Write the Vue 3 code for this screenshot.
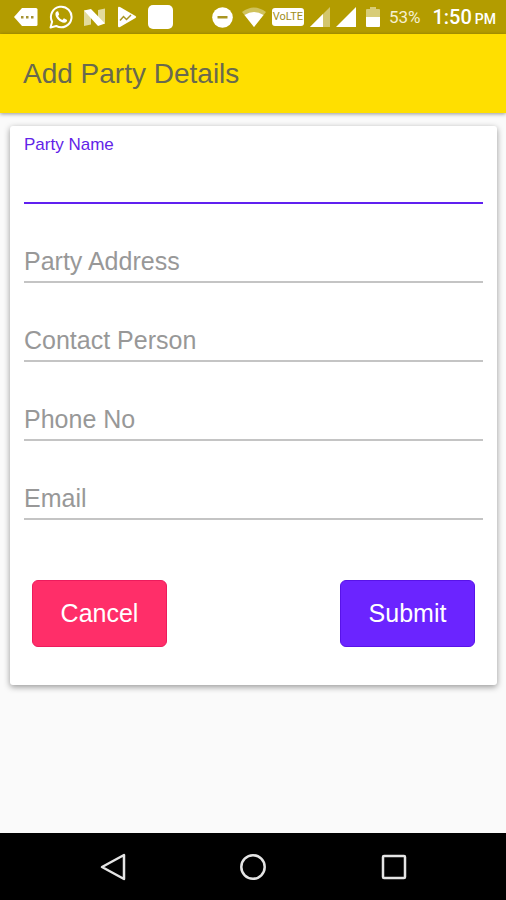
<script setup>
import { reactive, ref } from 'vue'

const fields = [
  { id: 'party-name', label: 'Party Name', type: 'text' },
  { id: 'party-address', label: 'Party Address', type: 'text' },
  { id: 'contact-person', label: 'Contact Person', type: 'text' },
  { id: 'phone-no', label: 'Phone No', type: 'tel' },
  { id: 'email', label: 'Email', type: 'email' },
]

const active = ref('party-name')
const values = reactive({})

function clearForm() {
  fields.forEach((field) => { values[field.id] = '' })
  active.value = 'party-name'
}
</script>

<template>
  <div class="screen">
    <div class="status">
      <div class="notices">
        <svg width="24" height="24" viewBox="0 0 24 24">
          <path d="M8 3h14a1.500 1.500 0 0 1 1.500 1.500v15a1.500 1.500 0 0 1-1.500 1.500H8L0 12z" fill="#fff" />
          <path d="M7 11h2.500v2.500H7zM12 11h2.500v2.500H12zM17 11h2.500v2.500H17z" fill="#a69335" />
        </svg>
        <svg width="24" height="24" viewBox="0 0 24 24">
          <path d="M1.500 22.500l1.600-5.800A10.300 10.300 0 1 1 7.300 21z" fill="none" stroke="#fff" stroke-width="2" stroke-linejoin="round" />
          <path d="M8.300 6.300c-.5 0-1.900.9-1.900 2.800 0 4 4.700 8.600 8.700 8.600 1.900 0 3-1.400 3-2.800l-3.200-1.700-1.500 1.700c-1.900-.7-3.400-2-4.300-4l1.100-1.400-1-2.900z" fill="#fff" />
        </svg>
        <svg width="22" height="24" viewBox="0 0 22 24">
          <path d="M0 5.500h7v14l-7 1.500zM14 5l7-1.500v15l-7 .5z" fill="#e2da9c" />
          <path d="M0 5.500L7 4 21 18.500 14 21z" fill="#fff" />
        </svg>
        <svg width="20" height="24" viewBox="0 0 20 24">
          <path d="M1 3q0-2 2-1l15.500 9q1.500 1 0 2L3 22q-2 1-2-1z" fill="#fff" />
          <path d="M3 15.500l3.500-4 3 3 4.500-4.500" fill="none" stroke="#a99523" stroke-width="1.500" />
        </svg>
        <svg width="25" height="24" viewBox="0 0 25 24">
          <rect width="25" height="24" rx="5" fill="#fff" />
        </svg>
      </div>
      <div class="system">
        <svg width="21" height="22" viewBox="0 0 21 22">
          <circle cx="10.500" cy="11.500" r="10.300" fill="#fff" />
          <path d="M5.500 10h10v2.500h-10z" fill="#a99523" />
        </svg>
        <svg class="wifi" width="24" height="20" viewBox="0 0 24 20">
          <path d="M12 20L0 5Q12-4 24 5z" fill="#cfc25c" />
          <path d="M12 20L2.500 8Q12 2 21.500 8z" fill="#fff" />
        </svg>
        <span class="volte">VoLTE</span>
        <svg width="20" height="20" viewBox="0 0 20 20">
          <path d="M20 0v20H0z" fill="#d3c66c" />
          <path d="M13 7v13H0z" fill="#fff" />
        </svg>
        <svg width="20" height="20" viewBox="0 0 20 20">
          <path d="M20 0v20H0z" fill="#fff" />
        </svg>
        <svg class="battery" width="14" height="20" viewBox="0 0 14 20">
          <path d="M4 0h6v2h3a1 1 0 0 1 1 1v7H0V3a1 1 0 0 1 1-1h3z" fill="#d8cc78" />
          <path d="M0 10h14v9a1 1 0 0 1-1 1H1a1 1 0 0 1-1-1z" fill="#fff" />
        </svg>
        <span class="percent">53%</span>
        <span class="clock">1:50 <small>PM</small></span>
      </div>
    </div>

    <header class="toolbar"><h1>Add Party Details</h1></header>

    <main>
      <form class="card" novalidate @submit.prevent>
        <div
          v-for="field in fields"
          :key="field.id"
          class="field"
          :class="{ active: active === field.id, filled: values[field.id] }"
        >
          <label :for="field.id">{{ field.label }}</label>
          <input :id="field.id" v-model="values[field.id]" :type="field.type" @focus="active = field.id">
        </div>
        <div class="actions">
          <button type="button" class="cancel" @click="clearForm">Cancel</button>
          <button type="submit" class="submit">Submit</button>
        </div>
      </form>
    </main>

    <nav class="navbar">
      <button type="button" aria-label="Back">
        <svg width="28" height="28" viewBox="0 0 28 28"><path d="M25 2v24L3 14z" /></svg>
      </button>
      <button type="button" aria-label="Home">
        <svg width="28" height="28" viewBox="0 0 28 28"><circle cx="14" cy="14" r="11.700" /></svg>
      </button>
      <button type="button" aria-label="Recent apps">
        <svg width="28" height="28" viewBox="0 0 28 28"><rect x="4" y="3" width="22" height="22" rx="1" /></svg>
      </button>
    </nav>
  </div>
</template>

<style>
body {
  margin: 0;
}
</style>

<style scoped>
.screen {
  display: flex;
  flex-direction: column;
  min-height: 100vh;
  background: #fafafa;
  font-family: "Liberation Sans", Arial, sans-serif;
}

.status {
  display: flex;
  justify-content: space-between;
  align-items: center;
  height: 34px;
  padding: 0 10px 0 14px;
  background: #b39c00;
  color: #fff;
  font-family: Roboto, sans-serif;
}

.notices,
.system {
  display: flex;
  align-items: center;
}

.notices {
  gap: 11px;
}

.system {
  gap: 6px;
}

svg {
  display: block;
  flex: none;
}

.wifi {
  margin-left: 3px;
}

.volte {
  width: 32px;
  border-radius: 3px;
  background: #fff;
  color: #a08d20;
  font-size: 11px;
  line-height: 18px;
  text-align: center;
}

.battery {
  margin: 0 3px 0 4px;
}

.percent {
  color: #f5f0d0;
  font-size: 17px;
}

.clock {
  margin-left: 6px;
  font-size: 20px;
  font-weight: 500;
  white-space: nowrap;
}

.clock small {
  margin-left: -2px;
  font-size: 14px;
}

.toolbar {
  display: flex;
  align-items: center;
  height: 79px;
  padding: 0 23px;
  background: #ffdf00;
  box-shadow: 0 1px 4px rgba(0, 0, 0, 0.4);
}

h1 {
  margin: 0;
  color: #69694e;
  font-size: 28px;
  font-weight: 400;
}

main {
  flex: 1;
  padding: 13px 9px 20px 10px;
}

.card {
  padding: 0 14px 38px;
  border-radius: 3px;
  background: #fff;
  box-shadow: 0 2px 6px rgba(0, 0, 0, 0.4);
}

.field {
  display: grid;
  height: 78px;
  padding-bottom: 1px;
}

.field label,
.field input {
  grid-area: 1 / 1;
}

.field label {
  align-self: end;
  padding-bottom: 8px;
  color: #989898;
  font-size: 25px;
  line-height: 28px;
  pointer-events: none;
}

.field input {
  box-sizing: border-box;
  width: 100%;
  height: 78px;
  padding: 32px 0 0;
  border: 0;
  border-bottom: 2px solid #c4c4c4;
  outline: 0;
  background: transparent;
  color: #333;
  font: inherit;
  font-size: 25px;
}

.field.active label,
.field.filled label {
  align-self: start;
  padding: 9px 0 0;
  font-size: 17px;
  line-height: 20px;
}

.field.active label {
  color: #6224e8;
}

.field.active input {
  border-color: #6020f0;
}

.actions {
  display: flex;
  justify-content: space-between;
  padding: 59px 8px 0;
}

.actions button {
  width: 135px;
  height: 67px;
  border: 1px solid;
  border-radius: 6px;
  color: #fff;
  font: inherit;
  font-size: 25px;
}

.actions .cancel {
  border-color: #ed1b5d;
  background: #ff2e69;
}

.actions .submit {
  border-color: #5813e8;
  background: #6b24ff;
}

.navbar {
  display: grid;
  grid-template-columns: repeat(3, 1fr);
  height: 67px;
  padding: 0 8.5%;
  background: #000;
}

.navbar button {
  display: grid;
  place-items: center;
  padding: 0;
  border: 0;
  background: transparent;
}

.navbar svg {
  fill: none;
  stroke: #e4e4e4;
  stroke-width: 2.500;
  stroke-linejoin: round;
}
</style>
